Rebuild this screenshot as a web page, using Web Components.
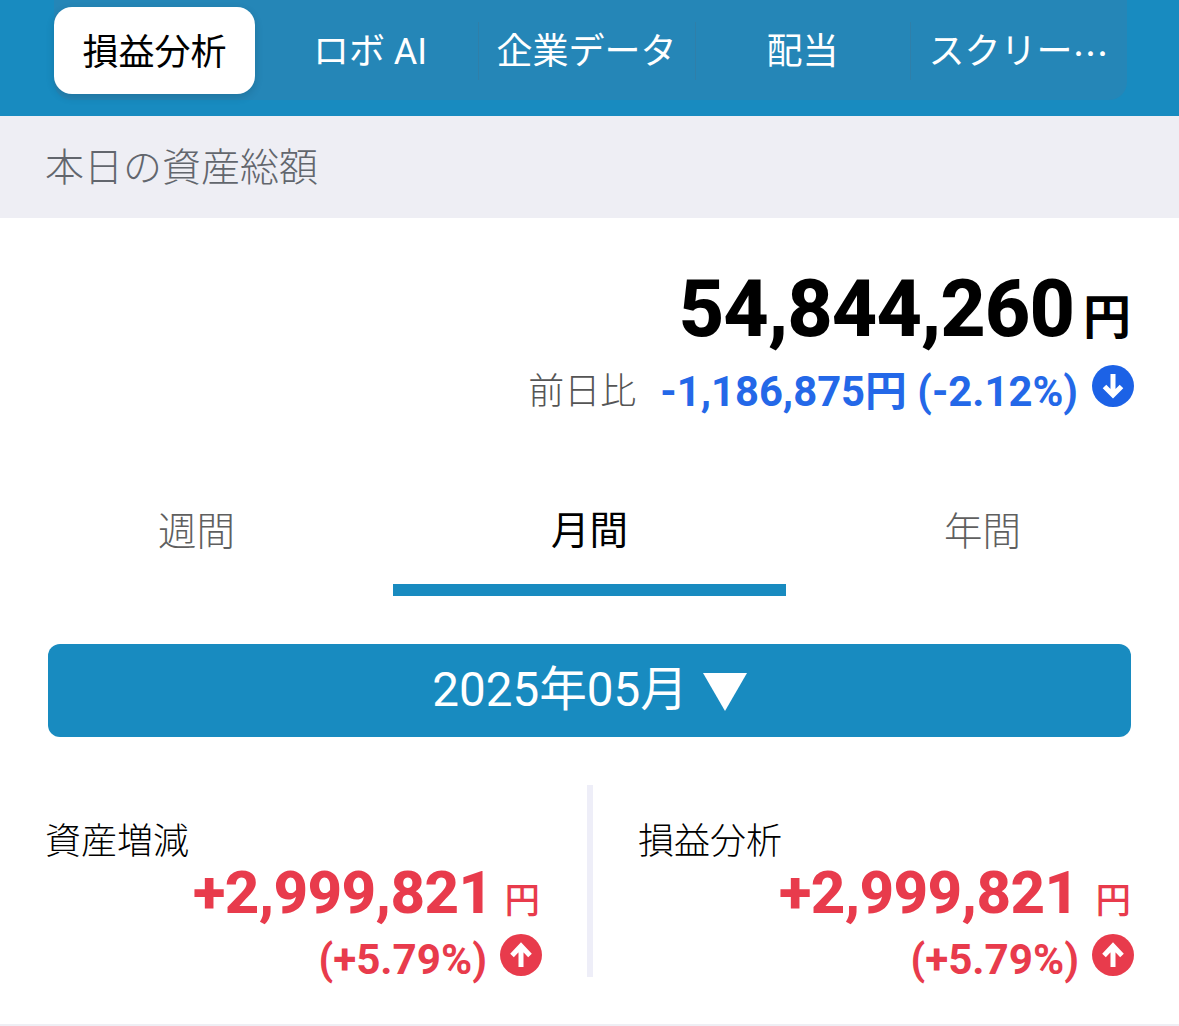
<!DOCTYPE html>
<html lang="ja">
<head>
<meta charset="utf-8">
<title>損益分析</title>
<style>
	html, body {
		margin: 0;
		background: #fff;
		font-family: Roboto, "Noto Sans CJK JP", sans-serif;
	}
	.cjk-dots {
		font-family: "Noto Sans CJK JP", sans-serif;
	}
</style>
</head>
<body>
<app-nav>
	<nav-item active>損益分析</nav-item>
	<nav-item>ロボ AI</nav-item>
	<nav-item divider>企業データ</nav-item>
	<nav-item divider>配当</nav-item>
	<nav-item divider>スクリー<span class="cjk-dots">…</span></nav-item>
</app-nav>
<section-bar>本日の資産総額</section-bar>
<total-box></total-box>
<period-tabs>
	<period-tab>週間</period-tab>
	<period-tab active>月間</period-tab>
	<period-tab>年間</period-tab>
</period-tabs>
<month-button>2025年05月</month-button>
<stat-row>
	<stat-cell label="資産増減" value="+2,999,821" rate="(+5.79%)"></stat-cell>
	<stat-cell label="損益分析" value="+2,999,821" rate="(+5.79%)" divider></stat-cell>
</stat-row>

<script>
const FONT = 'Roboto, "Noto Sans CJK JP", sans-serif';

class AppNav extends HTMLElement {
	constructor() {
		super();
		this.attachShadow({ mode: "open" }).innerHTML = `
<style>
	:host {
		display: block;
		height: 116px;
		background: #188bc0;
		padding: 0 52px 16px 54px;
		box-sizing: border-box;
	}
	.track {
		display: grid;
		grid-template-columns: 208px 216px 217px 215px 217px;
		height: 100%;
		background: #2586b7;
		border-radius: 0 0 18px 18px;
	}
</style>
<div class="track"><slot></slot></div>`;
	}
}

class NavItem extends HTMLElement {
	constructor() {
		super();
		this.attachShadow({ mode: "open" }).innerHTML = `
<style>
	:host {
		display: flex;
		align-items: center;
		justify-content: center;
		position: relative;
		color: #fff;
		font: 400 36px/1 ${FONT};
		white-space: nowrap;
	}
	:host([divider])::before {
		content: "";
		position: absolute;
		left: 0;
		top: 22px;
		height: 58px;
		width: 1px;
		background: #2f7fa9;
	}
	:host([active]) {
		color: #000;
		justify-content: flex-start;
		font-weight: 400;
	}
	:host([active]) .pill {
		background: #fff;
		border-radius: 18px;
		box-shadow: 0 3px 8px rgba(0, 0, 0, 0.14);
		width: 201px;
		height: 87px;
		margin: 7px 7px 6px 0;
	}
	.pill {
		display: flex;
		align-items: center;
		justify-content: center;
		padding-top: 4px;
		box-sizing: border-box;
	}
</style>
<div class="pill"><slot></slot></div>`;
	}
}

class SectionBar extends HTMLElement {
	constructor() {
		super();
		this.attachShadow({ mode: "open" }).innerHTML = `
<style>
	:host {
		display: flex;
		align-items: center;
		height: 102px;
		padding: 2px 0 0 45px;
		box-sizing: border-box;
		background: #eeeef4;
		color: #62666d;
		font: 300 39px/1 ${FONT};
	}
</style>
<slot></slot>`;
	}
}

class ArrowBadge extends HTMLElement {
	constructor() {
		super();
		this.attachShadow({ mode: "open" });
	}

	connectedCallback() {
		const up = this.getAttribute("dir") === "up";
		const path = up
			? "M21 33V12M12 21.5L21 12l9 9.5"
			: "M21 9v21M12.5 21.5L21 30l8.5-8.5";
		this.shadowRoot.innerHTML = `
<style>
	:host { display: block; width: 42px; height: 42px; flex: none; }
	svg { display: block; }
</style>
<svg width="42" height="42" viewBox="0 0 42 42">
	<circle cx="21" cy="21" r="21" fill="currentColor"/>
	<path d="${path}" fill="none" stroke="#fff" stroke-width="5"/>
</svg>`;
	}
}

class TotalBox extends HTMLElement {
	constructor() {
		super();
		this.attachShadow({ mode: "open" }).innerHTML = `
<style>
	:host {
		display: flex;
		flex-direction: column;
		align-items: flex-end;
		height: 258px;
		padding: 44px 45px 0 0;
		box-sizing: border-box;
	}
	.total {
		display: flex;
		align-items: baseline;
		gap: 9px;
		height: 94px;
		padding-right: 3px;
		color: #000;
		font: 800 79px/94px ${FONT};
	}
	.num {
		letter-spacing: -1px;
	}
	.yen {
		font-size: 48px;
		font-weight: 700;
		transform: translateY(-2px);
	}
	.diff {
		display: flex;
		align-items: center;
		height: 56px;
		margin-top: 8px;
	}
	.lab {
		color: #555;
		font: 300 36px/1 ${FONT};
		margin-right: 24px;
	}
	.val {
		color: #2468e8;
		font: 700 41.8px/1 ${FONT};
		margin-right: 14px;
	}
	arrow-badge {
		color: #1c62e6;
		margin-top: -12px;
	}
</style>
<div class="total"><span class="num">54,844,260</span><span class="yen">円</span></div>
<div class="diff">
	<span class="lab">前日比</span>
	<span class="val">-1,186,875円 (-2.12%)</span>
	<arrow-badge dir="down"></arrow-badge>
</div>`;
	}
}

class PeriodTabs extends HTMLElement {
	constructor() {
		super();
		this.attachShadow({ mode: "open" }).innerHTML = `
<style>
	:host {
		display: grid;
		grid-template-columns: 393px 393px 393px;
		height: 120px;
	}
</style>
<slot></slot>`;
	}
}

class PeriodTab extends HTMLElement {
	constructor() {
		super();
		this.attachShadow({ mode: "open" }).innerHTML = `
<style>
	:host {
		display: flex;
		align-items: center;
		justify-content: center;
		box-sizing: border-box;
		padding-bottom: 7px;
		color: #5f5f5f;
		font: 300 38.5px/1 ${FONT};
	}
	:host([active]) {
		color: #000;
		font-weight: 400;
		border-bottom: 12px solid #188bc0;
		padding: 2px 0 0;
	}
</style>
<slot></slot>`;
	}
}

class MonthButton extends HTMLElement {
	constructor() {
		super();
		this.attachShadow({ mode: "open" }).innerHTML = `
<style>
	:host {
		display: block;
		margin: 48px;
	}
	.btn {
		display: flex;
		align-items: center;
		justify-content: center;
		gap: 15px;
		height: 93px;
		padding-top: 1px;
		box-sizing: border-box;
		background: #188bc0;
		border-radius: 12px;
		color: #fff;
		font: 400 47.6px/1 ${FONT};
	}
	svg { display: block; margin-top: 1px; }
</style>
<div class="btn">
	<span><slot></slot></span>
	<svg width="44" height="38" viewBox="0 0 44 38"><path d="M0 0h44L22 38z" fill="#fff"/></svg>
</div>`;
	}
}

class StatRow extends HTMLElement {
	constructor() {
		super();
		this.attachShadow({ mode: "open" }).innerHTML = `
<style>
	:host {
		display: grid;
		grid-template-columns: 587px 592px;
		height: 241px;
		box-sizing: border-box;
		border-bottom: 2px solid #eeeef4;
	}
</style>
<slot></slot>`;
	}
}

class StatCell extends HTMLElement {
	constructor() {
		super();
		this.attachShadow({ mode: "open" });
	}

	connectedCallback() {
		this.shadowRoot.innerHTML = `
<style>
	:host {
		display: flex;
		flex-direction: column;
		height: 192px;
		box-sizing: border-box;
		padding: 37px 45px 0 45px;
		color: #e83b4c;
	}
	:host([divider]) {
		border-left: 6px solid #eeeef8;
		padding-right: 45px;
	}
	.label {
		color: #000;
		font: 300 36px/40px ${FONT};
	}
	.value {
		display: flex;
		align-items: baseline;
		justify-content: flex-end;
		gap: 12px;
		height: 68px;
		margin-top: -3px;
		padding-right: 2px;
		font: 800 60px/68px ${FONT};
	}
	:host([divider]) .value {
		gap: 17px;
		padding-right: 3px;
	}
	.num {
		letter-spacing: -0.6px;
	}
	.yen {
		font-size: 35.5px;
		font-weight: 500;
	}
	.rate {
		display: flex;
		align-items: center;
		justify-content: flex-end;
		gap: 13px;
		height: 48px;
		margin-top: 9px;
		font: 700 42.2px/48px ${FONT};
	}
	arrow-badge { margin-top: -11px; }
</style>
<div class="label">${this.getAttribute("label")}</div>
<div class="value"><span class="num">${this.getAttribute("value")}</span><span class="yen">円</span></div>
<div class="rate"><span>${this.getAttribute("rate")}</span><arrow-badge dir="up"></arrow-badge></div>`;
	}
}

customElements.define("app-nav", AppNav);
customElements.define("nav-item", NavItem);
customElements.define("section-bar", SectionBar);
customElements.define("arrow-badge", ArrowBadge);
customElements.define("total-box", TotalBox);
customElements.define("period-tabs", PeriodTabs);
customElements.define("period-tab", PeriodTab);
customElements.define("month-button", MonthButton);
customElements.define("stat-row", StatRow);
customElements.define("stat-cell", StatCell);
</script>
</body>
</html>
